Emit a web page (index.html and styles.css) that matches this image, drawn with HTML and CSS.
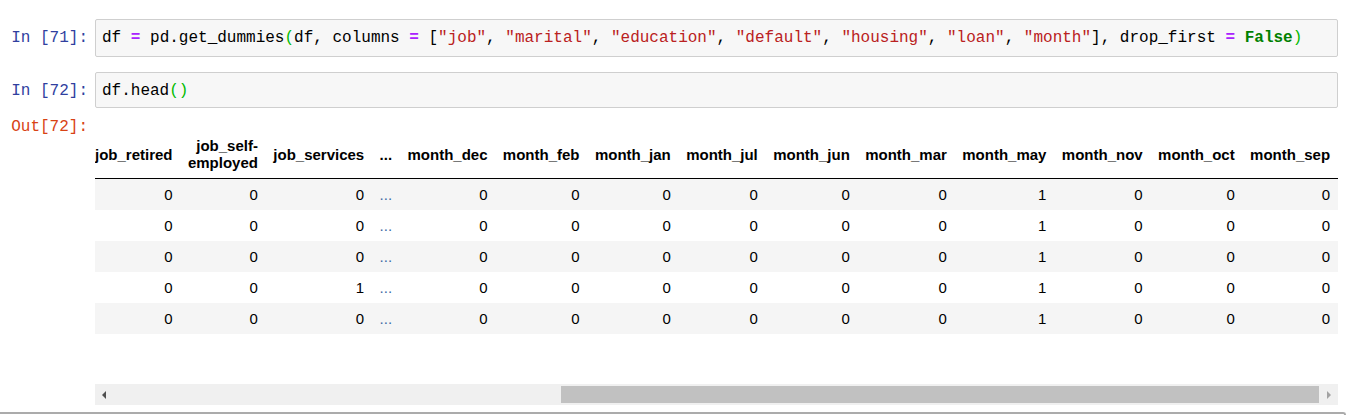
FILE: index.html
```html
<!DOCTYPE html>
<html>
<head>
<meta charset="utf-8">
<link rel="stylesheet" href="styles.css">
</head>
<body>
<div class="notebook">
  <div class="cell">
    <div class="prompt in">In&nbsp;[71]:</div>
    <div class="input"><span>df </span><span class="op">=</span><span> pd.get_dummies</span><span class="br">(</span><span>df, columns </span><span class="op">=</span><span> [</span><span class="str">"job"</span><span>, </span><span class="str">"marital"</span><span>, </span><span class="str">"education"</span><span>, </span><span class="str">"default"</span><span>, </span><span class="str">"housing"</span><span>, </span><span class="str">"loan"</span><span>, </span><span class="str">"month"</span><span>], drop_first </span><span class="op">=</span><span> </span><span class="kw">False</span><span class="br">)</span></div>
  </div>
  <div class="cell">
    <div class="prompt in short">In&nbsp;[72]:</div>
    <div class="input short"><span>df.head</span><span class="br">()</span></div>
  </div>
  <div class="cell output">
    <div class="prompt out">Out[72]:</div>
    <div class="output-area">
      <div class="scroller">
        <table class="frame">
          <thead>
            <tr>
              <th>job_retired</th><th>job_self-employed</th><th>job_services</th><th>...</th><th>month_dec</th><th>month_feb</th><th>month_jan</th><th>month_jul</th><th>month_jun</th><th>month_mar</th><th>month_may</th><th>month_nov</th><th>month_oct</th><th>month_sep</th>
            </tr>
          </thead>
          <tbody>
            <tr><td>0</td><td>0</td><td>0</td><td class="dots">...</td><td>0</td><td>0</td><td>0</td><td>0</td><td>0</td><td>0</td><td class="one">1</td><td>0</td><td>0</td><td>0</td></tr>
            <tr><td>0</td><td>0</td><td>0</td><td class="dots">...</td><td>0</td><td>0</td><td>0</td><td>0</td><td>0</td><td>0</td><td class="one">1</td><td>0</td><td>0</td><td>0</td></tr>
            <tr><td>0</td><td>0</td><td>0</td><td class="dots">...</td><td>0</td><td>0</td><td>0</td><td>0</td><td>0</td><td>0</td><td class="one">1</td><td>0</td><td>0</td><td>0</td></tr>
            <tr><td>0</td><td>0</td><td class="one">1</td><td class="dots">...</td><td>0</td><td>0</td><td>0</td><td>0</td><td>0</td><td>0</td><td class="one">1</td><td>0</td><td>0</td><td>0</td></tr>
            <tr><td>0</td><td>0</td><td>0</td><td class="dots">...</td><td>0</td><td>0</td><td>0</td><td>0</td><td>0</td><td>0</td><td class="one">1</td><td>0</td><td>0</td><td>0</td></tr>
          </tbody>
        </table>
      </div>
      <div class="hscroll">
        <div class="sbtn left"><span class="tri-left"></span></div>
        <div class="trough"><div class="thumb"></div></div>
        <div class="sbtn right"><span class="tri-right"></span></div>
      </div>
    </div>
  </div>
  <div class="next-cell"></div>
</div>
</body>
</html>
```

FILE: styles.css
```css
html, body {
  margin: 0;
  padding: 0;
  background: #fff;
  overflow: hidden;
}

.notebook {
  padding-top: 19px;
  width: 1352px;
}

.cell {
  display: flex;
  align-items: flex-start;
  margin-bottom: 15px;
}

.prompt {
  flex: 0 0 95px;
  box-sizing: border-box;
  padding-right: 7px;
  text-align: right;
  font-family: "Liberation Mono", "DejaVu Sans Mono", monospace;
  font-size: 16px;
  line-height: 20px;
  padding-top: 9px;
  white-space: nowrap;
}

.prompt.short { padding-top: 9px; }
.prompt.in { color: #303f9f; }
.prompt.out { color: #d84315; padding-top: 0; }

.input {
  width: 1243px;
  box-sizing: border-box;
  background: #f7f7f7;
  border: 1px solid #cfcfcf;
  border-radius: 2px;
  padding: 8px 6px;
  font-family: "Liberation Mono", "DejaVu Sans Mono", monospace;
  font-size: 16px;
  line-height: 20px;
  color: #000;
  white-space: pre;
}

.input.short {
  padding-top: 8px;
  padding-bottom: 6px;
}

.op { color: #aa22ff; font-weight: bold; }
.br { color: #00bb00; }
.str { color: #ba2121; }
.kw { color: #008000; font-weight: bold; }

.cell.output {
  margin-top: -6px;
  margin-bottom: 0;
}

.output-area {
  width: 1243px;
}

.scroller {
  overflow: hidden;
  padding-top: 13px;
  height: 254px;
}

.frame {
  width: min-content;
  border-collapse: collapse;
  border-spacing: 0;
  font-family: "Liberation Sans", Arial, sans-serif;
  font-size: 15px;
  line-height: 17px;
  color: #000;
}

.frame th, .frame td {
  padding: 7px 7.7px;
  text-align: right;
  vertical-align: middle;
}

.frame th:first-child, .frame td:first-child {
  padding-left: 0;
}

.frame th {
  font-weight: bold;
}

.frame thead tr {
  border-bottom: 1px solid #000;
}

.frame tbody tr:nth-child(odd) {
  background: #f5f5f5;
}

.frame td.dots {
  color: #3f6aa6;
}

.hscroll {
  display: flex;
  height: 21px;
  background: #f0f0f0;
}

.sbtn {
  display: flex;
  align-items: center;
  justify-content: center;
}

.sbtn.left { flex: 0 0 17px; }
.sbtn.right { flex: 0 0 19px; }

.tri-left {
  width: 0;
  height: 0;
  border-top: 4px solid transparent;
  border-bottom: 4px solid transparent;
  border-right: 4px solid #505050;
}

.tri-right {
  width: 0;
  height: 0;
  border-top: 4px solid transparent;
  border-bottom: 4px solid transparent;
  border-left: 4px solid #a3a3a3;
}

.trough {
  flex: 1;
  display: flex;
  justify-content: flex-end;
  align-items: center;
}

.thumb {
  width: 758px;
  height: 17px;
  background: #c1c1c1;
}

.next-cell {
  margin-top: 7px;
  margin-left: -4px;
  width: 1350px;
  height: 20px;
  box-sizing: border-box;
  border-top: 2px solid #ababab;
  border-right: 2px solid #ababab;
  border-top-right-radius: 3px;
}
```
